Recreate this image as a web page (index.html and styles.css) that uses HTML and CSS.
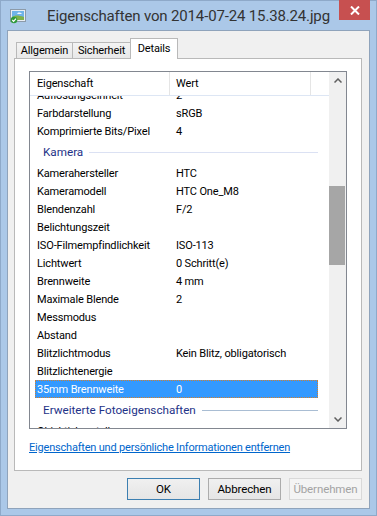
FILE: index.html
```html
<!DOCTYPE html>
<html lang="de">
<head>
  <meta charset="UTF-8">
  <title>Eigenschaften von 2014-07-24 15.38.24.jpg</title>
  <link rel="stylesheet" href="styles.css">
</head>
<body>
  <div class="window">
    <div class="titlebar">
      <svg class="app-icon" width="16" height="15" viewBox="0 0 16 15">
        <rect x="0.5" y="0.5" width="15" height="12" fill="#e9eef3" stroke="#8c9aa8"/>
        <rect x="2" y="2" width="12" height="9" fill="#6fb4e8"/>
        <path d="M9 3.5c1.5 0 2.5.6 3 1.5H7c.3-.9 1-1.5 2-1.5z" fill="#eef6fc"/>
        <path d="M2 8c3-2 6-2 12 0v3H2z" fill="#7fb24a"/>
        <circle cx="4" cy="11" r="3.3" fill="#2f9a3a"/>
        <path d="M2.3 11l1.3 1.3 2.4-2.6" fill="none" stroke="#fff" stroke-width="1.2"/>
      </svg>
      <div class="title">Eigenschaften von 2014-07-24 15.38.24.jpg</div>
      <div class="close">
        <svg width="10" height="9" viewBox="0 0 10 9">
          <path d="M1 0.5l8 8M9 0.5l-8 8" stroke="#fff" stroke-width="2"/>
        </svg>
      </div>
    </div>

    <div class="client">
      <div class="tabs">
        <div class="tab tab-general">Allgemein</div>
        <div class="tab tab-security">Sicherheit</div>
        <div class="tab tab-details active">Details</div>
      </div>

      <div class="pane">
        <div class="listview">
          <div class="lv-main">
            <div class="lv-header">
              <div class="hcol hcol-name">Eigenschaft</div>
              <div class="hcol hcol-value">Wert</div>
              <div class="hcol hcol-rest"></div>
            </div>
            <div class="lv-body">
              <div class="lv-rows">
                <div class="row"><span class="key">Auflösungseinheit</span><span class="val">2</span></div>
                <div class="row"><span class="key">Farbdarstellung</span><span class="val">sRGB</span></div>
                <div class="row"><span class="key">Komprimierte Bits/Pixel</span><span class="val">4</span></div>
                <div class="group">Kamera</div>
                <div class="row"><span class="key">Kamerahersteller</span><span class="val">HTC</span></div>
                <div class="row"><span class="key">Kameramodell</span><span class="val">HTC One_M8</span></div>
                <div class="row"><span class="key">Blendenzahl</span><span class="val">F/2</span></div>
                <div class="row"><span class="key">Belichtungszeit</span><span class="val"></span></div>
                <div class="row"><span class="key">ISO-Filmempfindlichkeit</span><span class="val">ISO-113</span></div>
                <div class="row"><span class="key">Lichtwert</span><span class="val">0 Schritt(e)</span></div>
                <div class="row"><span class="key">Brennweite</span><span class="val">4 mm</span></div>
                <div class="row"><span class="key">Maximale Blende</span><span class="val">2</span></div>
                <div class="row"><span class="key">Messmodus</span><span class="val"></span></div>
                <div class="row"><span class="key">Abstand</span><span class="val"></span></div>
                <div class="row"><span class="key">Blitzlichtmodus</span><span class="val">Kein Blitz, obligatorisch</span></div>
                <div class="row"><span class="key">Blitzlichtenergie</span><span class="val"></span></div>
                <div class="row selected"><span class="key">35mm Brennweite</span><span class="val">0</span></div>
                <div class="group group-focus">Erweiterte Fotoeigenschaften</div>
                <div class="row"><span class="key">Objektivhersteller</span><span class="val"></span></div>
              </div>
            </div>
          </div>
          <div class="scrollbar">
            <div class="sb-btn">
              <svg width="8" height="5" viewBox="0 0 8 5"><path d="M0.5 4.5L4 1l3.5 3.5" fill="none" stroke="#5f5f5f" stroke-width="1.5"/></svg>
            </div>
            <div class="sb-track"><div class="sb-thumb"></div></div>
            <div class="sb-btn">
              <svg width="8" height="5" viewBox="0 0 8 5"><path d="M0.5 0.5L4 4l3.5-3.5" fill="none" stroke="#5f5f5f" stroke-width="1.5"/></svg>
            </div>
          </div>
        </div>
        <a class="remove-link" href="#">Eigenschaften und persönliche Informationen entfernen</a>
      </div>

      <div class="buttons">
        <button class="btn btn-default">OK</button>
        <button class="btn">Abbrechen</button>
        <button class="btn" disabled>Übernehmen</button>
      </div>
    </div>
  </div>
</body>
</html>
```

FILE: styles.css
```css
* {
  box-sizing: border-box;
}
body {
  margin: 0;
  font-family: Roboto, "Liberation Sans", sans-serif;
  font-size: 11px;
  letter-spacing: -0.15px;
  color: #000;
}
.window {
  width: 377px;
  height: 516px;
  background-color: #abc8e8;
  border: 1px solid #8ea9c9;
  display: flex;
  flex-direction: column;
}

/* title bar */
.titlebar {
  height: 29px;
  display: grid;
  grid-template-columns: 1fr auto 1fr;
  align-items: center;
}
.app-icon {
  justify-self: start;
  margin-left: 9px;
  margin-top: 2px;
}
.title {
  font-size: 15px;
  letter-spacing: -0.15px;
  color: #333;
  padding-top: 1px;
}
.close {
  justify-self: end;
  align-self: start;
  width: 31px;
  height: 20px;
  margin-top: -1px;
  margin-right: 6px;
  background-color: #c75050;
  display: flex;
  align-items: center;
  justify-content: center;
}

/* client area */
.client {
  flex: 1;
  margin: 0 6px 6px;
  border: 1px solid #8fa3bb;
  background-color: #f0f0f0;
  padding: 7px 7px 7px 6px;
  display: flex;
  flex-direction: column;
}

.tabs {
  display: flex;
  align-items: flex-end;
  padding-left: 2px;
  margin-bottom: -1px;
}
.tab {
  height: 17px;
  border: 1px solid #b9b9b9;
  background: linear-gradient(#f3f3f3, #e8e8e8);
  text-align: center;
  line-height: 16px;
}
.tab-general {
  width: 57px;
}
.tab-security {
  width: 59px;
  margin-left: -1px;
}
.tab-details {
  width: 48px;
  margin-left: -1px;
}
.tab.active {
  height: 21px;
  border-bottom: none;
  background: #fff;
  line-height: 19px;
  z-index: 1;
}

.pane {
  border: 1px solid #b9b9b9;
  background-color: #fff;
  padding: 12px 14px 15px;
}

/* list view */
.listview {
  height: 358px;
  border: 1px solid #828790;
  display: flex;
}
.lv-main {
  flex: 1;
  display: flex;
  flex-direction: column;
  min-width: 0;
}
.lv-header {
  height: 24px;
  display: flex;
  border-bottom: 1px solid #dde6f4;
}
.hcol {
  border-right: 1px solid #e5e5e5;
  padding-top: 5px;
}
.hcol-name {
  width: 140px;
  padding-left: 7px;
}
.hcol-value {
  width: 141px;
  padding-left: 6px;
}
.hcol-rest {
  flex: 1;
  border-right: none;
}
.lv-body {
  flex: 1;
  overflow: hidden;
}
.lv-rows {
  margin-top: -10px;
}
.row {
  display: flex;
  align-items: center;
  height: 18px;
  width: 283px;
  margin-left: 5px;
  white-space: nowrap;
}
.row .key {
  width: 141px;
  padding-left: 2px;
}
.row.selected {
  background-color: #3399ff;
  color: #fff;
  outline: 1px dotted #d27f2e;
  outline-offset: -1px;
}
.group {
  display: flex;
  align-items: center;
  height: 24px;
  width: 283px;
  margin-left: 5px;
  padding-left: 8px;
  font-size: 11.7px;
  letter-spacing: 0;
  color: #1e3287;
}
.group::after {
  content: "";
  flex: 1;
  height: 1px;
  margin-left: 6px;
  background-color: #dbe1f3;
}
.group-focus::after {
  background-color: #a9bdd3;
}

.scrollbar {
  width: 17px;
  background-color: #f0f0f0;
  display: flex;
  flex-direction: column;
}
.sb-btn {
  height: 17px;
  display: flex;
  align-items: center;
  justify-content: center;
}
.sb-track {
  flex: 1;
}
.sb-thumb {
  margin: 97px 1px 0 0;
  height: 79px;
  background-color: #a6a6a6;
}

.remove-link {
  display: block;
  margin-top: 11px;
  line-height: 15px;
  letter-spacing: -0.2px;
  color: #0066cc;
}

/* dialog buttons */
.buttons {
  display: flex;
  justify-content: flex-end;
  gap: 8px;
  margin-top: 7px;
}
.btn {
  width: 73px;
  height: 22px;
  border: 1px solid #acacac;
  background: linear-gradient(#f0f0f0, #e5e5e5);
  font-family: inherit;
  font-size: 11.5px;
  letter-spacing: -0.1px;
  color: #000;
  padding: 0;
}
.btn-default {
  border-color: #3c7fb1;
}
.btn:disabled {
  border-color: #d9d9d9;
  background: #f4f4f4;
  color: #a3a3a3;
}
```
